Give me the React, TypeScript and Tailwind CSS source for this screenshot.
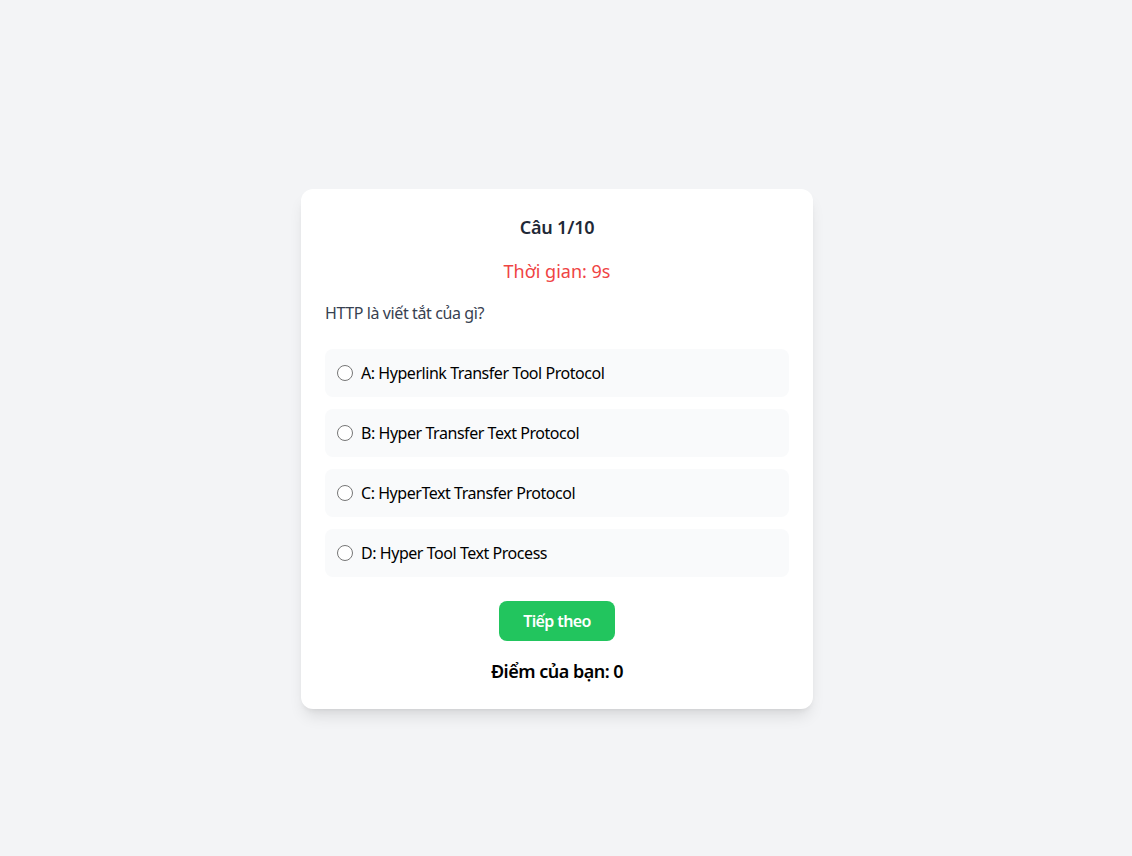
import React from "react";

const options = [
  "A: Hyperlink Transfer Tool Protocol",
  "B: Hyper Transfer Text Protocol",
  "C: HyperText Transfer Protocol",
  "D: Hyper Tool Text Process",
];

export default function App() {
  return (
    <div
      className="min-h-screen bg-[#f3f4f6] flex items-center justify-center pt-[42px] pr-[18px]"
      style={{ fontFamily: '"Noto Sans", "Open Sans", sans-serif' }}
    >
      <div className="w-[512px] bg-white rounded-xl shadow-lg p-6">
        <h2 className="text-lg font-semibold text-[#1f2937] text-center mb-4 tracking-[-0.2px]">Câu 1/10</h2>
        <p className="text-lg text-[#ef4444] text-center mb-4">Thời gian: 9s</p>
        <p className="text-base text-[#374151] mb-6 tracking-[-0.4px]">HTTP là viết tắt của gì?</p>
        <div className="flex flex-col gap-3">
          {options.map((o) => (
            <label key={o} className="flex items-center px-3 py-3 bg-[#f9fafb] rounded-lg text-base text-black tracking-[-0.45px]">
              <input type="radio" name="q" className="w-4 h-4 mr-2 m-0" />
              <span>{o}</span>
            </label>
          ))}
        </div>
        <div className="flex justify-center mt-6">
          <button className="bg-[#22c55e] text-white font-semibold rounded-lg px-6 h-10 tracking-[-0.6px]">Tiếp theo</button>
        </div>
        <p className="text-lg font-semibold text-center mt-4 text-black tracking-[-0.5px]">Điểm của bạn: 0</p>
      </div>
    </div>
  );
}
